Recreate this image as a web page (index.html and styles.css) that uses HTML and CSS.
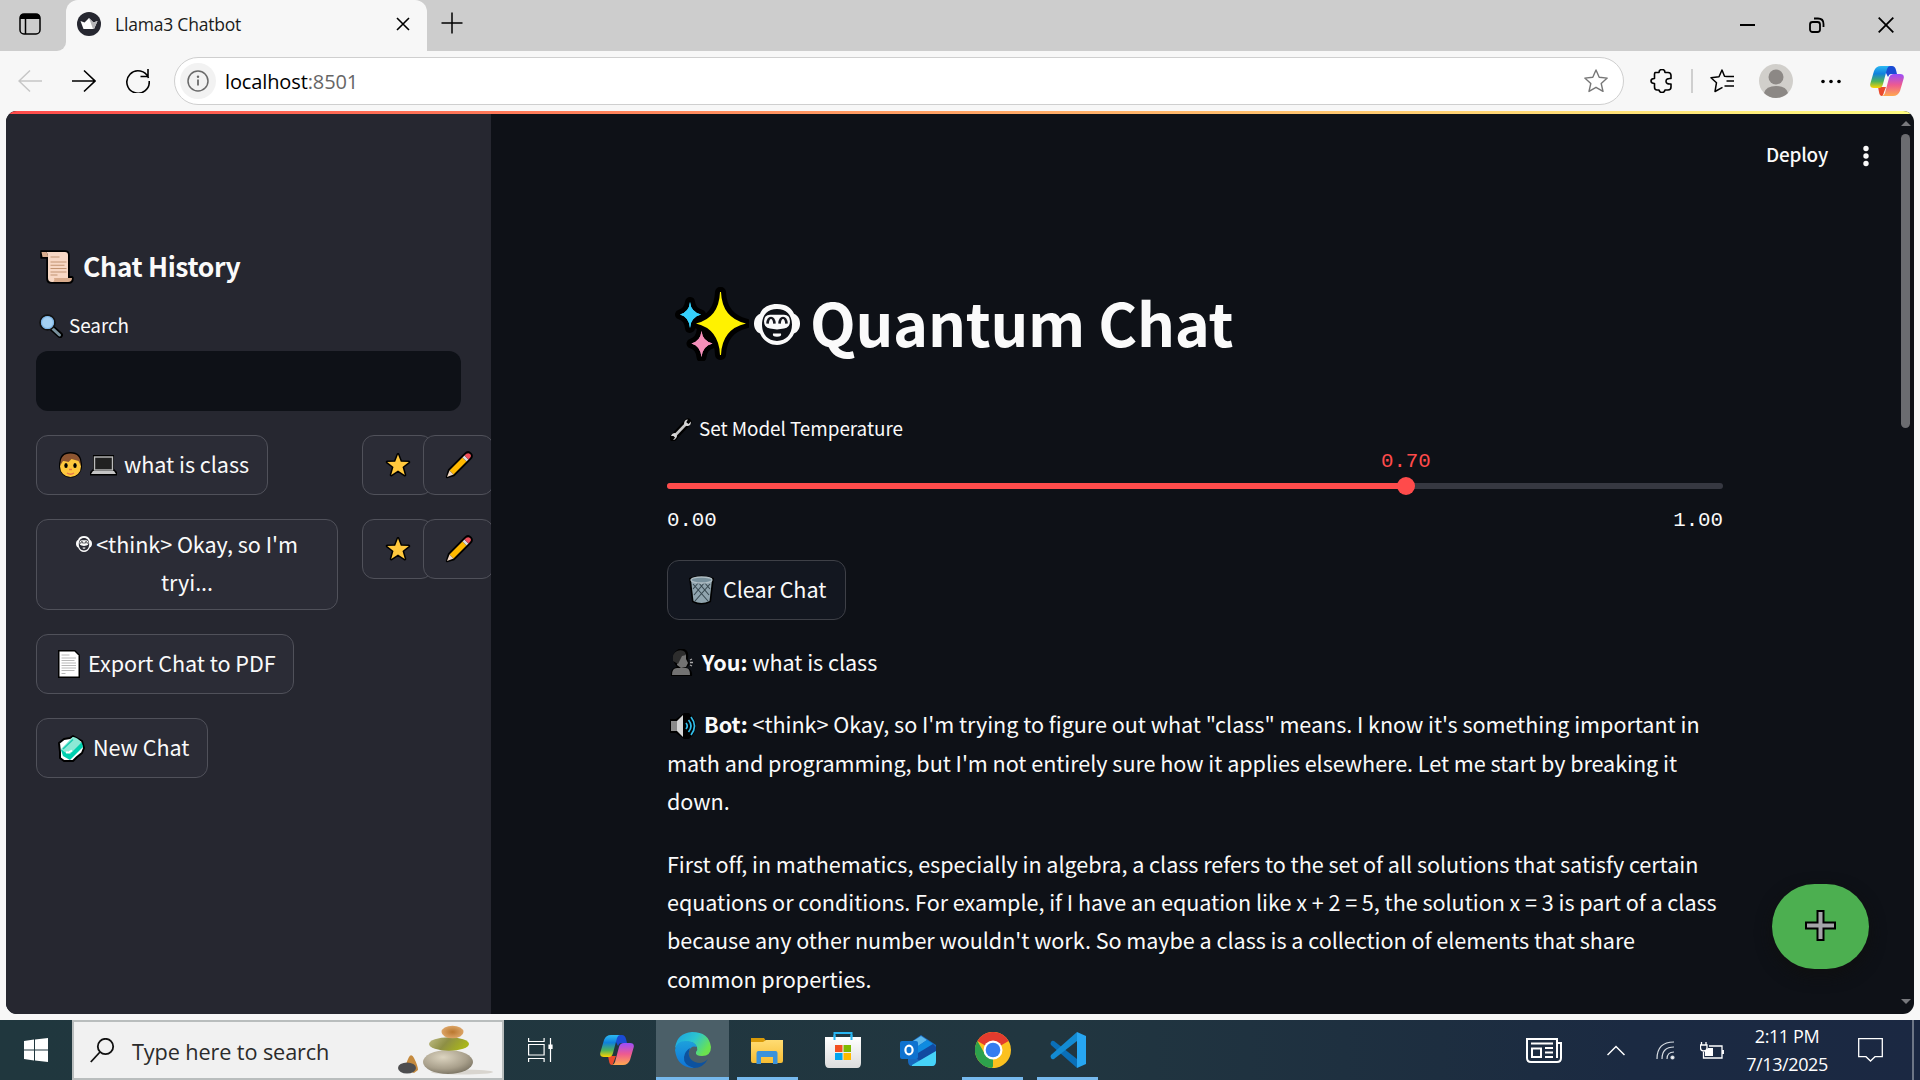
FILE: index.html
```html
<!DOCTYPE html>
<html lang="en">
<head>
<meta charset="utf-8">
<title>Llama3 Chatbot</title>
<link rel="stylesheet" href="styles.css">
</head>
<body>
<svg class="defs" width="0" height="0">
  <defs>
    <linearGradient id="cpA" x1="0" y1="0" x2="0" y2="1"><stop offset="0" stop-color="#2cb9f2"/><stop offset=".35" stop-color="#0f80dd"/><stop offset=".7" stop-color="#4fb35a"/><stop offset="1" stop-color="#ffd400"/></linearGradient>
    <linearGradient id="cpB" x1="0" y1="0" x2="0" y2="1"><stop offset="0" stop-color="#9a4dfb"/><stop offset=".5" stop-color="#ee5a90"/><stop offset="1" stop-color="#ffa94f"/></linearGradient>
    <linearGradient id="edgeA" x1="0" y1="0" x2="1" y2=".5"><stop offset="0" stop-color="#1aa0e4"/><stop offset=".55" stop-color="#2cc5cf"/><stop offset="1" stop-color="#6be34e"/></linearGradient>
    <linearGradient id="edgeB" x1="0" y1="0" x2="0" y2="1"><stop offset="0" stop-color="#1da0dc"/><stop offset="1" stop-color="#0f74d8"/></linearGradient>
    <linearGradient id="fold" x1="0" y1="0" x2="0" y2="1"><stop offset="0" stop-color="#ffdc73"/><stop offset="1" stop-color="#f7bd33"/></linearGradient>
    <linearGradient id="bag" x1="0" y1="0" x2="0" y2="1"><stop offset="0" stop-color="#fff"/><stop offset="1" stop-color="#dcdcdc"/></linearGradient>
    <radialGradient id="stone" cx=".4" cy=".3" r=".8"><stop offset="0" stop-color="#dcd4c0"/><stop offset=".6" stop-color="#a89f8b"/><stop offset="1" stop-color="#6f6858"/></radialGradient>
    <linearGradient id="moss" x1="0" y1="0" x2="1" y2=".3"><stop offset="0" stop-color="#c0bd86"/><stop offset=".5" stop-color="#8e8f45"/><stop offset="1" stop-color="#a9b51b"/></linearGradient>
    <radialGradient id="amber"><stop offset="0" stop-color="#b9772f"/><stop offset="1" stop-color="#dca466"/></radialGradient>
    <symbol id="copilot" viewBox="0 0 34 30">
      <path d="M11 0h11q3 0 4 4l1 4h-6q-2 0-3 3l-3-6z" fill="#1a4bd4"/>
      <path d="M8 21h8l-2 5q-1 4-2 4-2.500 0-3-4z" fill="#ea4a2d"/>
      <path d="M11 0h9q-2 0-3 3l-4 15q-1 4-4 4H4q-5 0-3.500-5L4 5q2-5 7-5z" fill="url(#cpA)"/>
      <path d="M24 8h6q5 0 3.500 5L30 25q-2 5-7 5H12q2 0 3-3l4-15q1-4 5-4z" fill="url(#cpB)"/>
    </symbol>
    <symbol id="star" viewBox="0 0 26 26"><path d="M13 2.500l2.800 7.300 8 .2-6.300 4.900 2.300 8.100L13 18.500l-6.800 4.500 2.300-8.100L2.200 10l8-.2z" fill="#ffc83d" stroke="#000" stroke-width="3" stroke-linejoin="round" paint-order="stroke"/></symbol>
    <symbol id="pencil" viewBox="0 0 28 28">
      <path d="M2 26l2-7L20 3q3-3 5.500-.5T25 8L9 24z" fill="#000" stroke="#000" stroke-width="2.400" stroke-linejoin="round"/>
      <path d="M4.500 19.500L17.500 6.500l4 4L8.500 23.500z" fill="#ffb900"/><path d="M2 26l2.500-6.500 4 4z" fill="#f2d9c4"/>
      <path d="M17.500 6.500l2-2 4 4-2 2z" fill="#ddd"/><path d="M19.500 4.500q3-3.500 5.500-1.500t-1.500 5.500z" fill="#f0505c"/>
    </symbol>
    <symbol id="face" viewBox="0 0 46 50">
      <path fill="#fafafa" fill-rule="evenodd" d="M23 0c9 0 15 5 17 12 4 2 6 7 6 12s-2 10-6 12c-3 8-9 14-17 14S9 44 6 36c-4-2-6-7-6-12S2 14 6 12C8 5 14 0 23 0zM23 6c-9 0-15 7-15 19s6 20 15 20 15-8 15-20S32 6 23 6z"/>
      <path fill="#fafafa" d="M16 13h14q6 0 6 8t-6 9q-7 2-14 0-6-1-6-9t6-8zM19 36h8q1 4-4 4t-4-4z"/>
      <path d="M13.500 24q.5-7 3.500-7t3.500 7M25.500 24q.5-7 3.500-7t3.500 7" fill="none" stroke="#17181f" stroke-width="2.600"/>
    </symbol>
  </defs>
</svg>

<div class="screen">
  <header class="tabstrip">
    <div class="workspace"><svg width="22" height="22" viewBox="0 0 22 22"><rect x="1" y="1" width="20" height="20" rx="4" fill="none" stroke="#000" stroke-width="1.500"/><path d="M1 6V4q0-3 3-3h14q3 0 3 3v2z"/><path d="M6.500 6v15" stroke="#000" stroke-width="1.500"/></svg></div>
    <div class="tab">
      <svg width="24" height="24" viewBox="0 0 24 24"><circle cx="12" cy="12" r="12" fill="#262730"/><path d="M3.500 9l4 1.500L12 6l4.500 4.500 4-1.500-3.500 8H6.500z" fill="#fff"/><path d="M12 6l4.500 4.500 4-1.500-3.500 8h-1z" fill="#b5b5b8"/></svg>
      <span class="tab-title">Llama3 Chatbot</span>
      <svg width="14" height="14" viewBox="0 0 14 14"><path d="M1 1l12 12M13 1L1 13" stroke="#000" stroke-width="1.600"/></svg>
    </div>
    <svg class="newtab" width="22" height="22" viewBox="0 0 22 22"><path d="M11 .5v21M.5 11h21" stroke="#000" stroke-width="1.500"/></svg>
    <div class="wincontrols">
      <svg width="16" height="16" viewBox="0 0 16 16"><path d="M0 8h15" stroke="#000" stroke-width="2"/></svg>
      <svg width="16" height="16" viewBox="0 0 16 16" fill="none" stroke="#000" stroke-width="1.800"><rect x="1" y="5" width="10" height="10" rx="2.500"/><path d="M5 1.500h4q5.500 0 5.500 5.500v3"/></svg>
      <svg width="16" height="16" viewBox="0 0 16 16"><path d="M.7.7l14.600 14.600M15.300.7L.7 15.300" stroke="#000" stroke-width="1.800"/></svg>
    </div>
  </header>

  <nav class="toolbar">
    <svg width="24" height="24" viewBox="0 0 24 24" fill="none" stroke="#c6c6c6" stroke-width="1.500"><path d="M24 12H1M12 1.500L1 12l11 10.500"/></svg>
    <svg width="24" height="24" viewBox="0 0 24 24" fill="none" stroke="#000" stroke-width="1.600"><path d="M0 12h23M12 1.500L23 12 12 22.500"/></svg>
    <svg width="24" height="24" viewBox="0 0 24 24" fill="none" stroke="#000" stroke-width="1.600"><path d="M22.500 9A11.200 11.200 0 1 0 23.200 12M22 0v7.500h-7.500"/></svg>
    <div class="omnibox">
      <span class="info"><svg width="22" height="22" viewBox="0 0 22 22"><circle cx="11" cy="11" r="10" fill="none" stroke="#6a6a6a" stroke-width="1.500"/><path d="M11 9.500v6" stroke="#6a6a6a" stroke-width="1.800"/><circle cx="11" cy="6.700" r="1.200" fill="#6a6a6a"/></svg></span>
      <span class="url">localhost<span class="port">:8501</span></span>
      <svg width="24" height="24" viewBox="0 0 24 24"><path d="M12 1l3.200 7.300 8 .8-6 5.400 1.800 7.900L12 18.300l-7 4.100 1.800-7.900-6-5.400 8-.8z" fill="none" stroke="#777" stroke-width="1.400" stroke-linejoin="round"/></svg>
    </div>
    <div class="tools">
      <svg width="23" height="24" viewBox="0 0 23 24"><path d="M5 3.500h4q0-3 3-3t3 3h3q3 0 3 3v3q-5-.5-5 2.700t5 2.800v3q0 3-3 3h-3q-.5 2.500-3 2.500T9 21H7q-2.500 0-2.500-3v-3.500Q1 14.500 1 12t3.500-2.500V5z" fill="none" stroke="#000" stroke-width="1.600" stroke-linejoin="round"/></svg>
      <span class="divider"></span>
      <svg width="24" height="24" viewBox="0 0 24 24" fill="none" stroke="#000" stroke-width="1.500" stroke-linejoin="round"><path d="M17 7.500l-2.500-.3L12 1 9 7.800l-8 .9 5.500 5L5 22.500l7.500-4.200M14.500 7.500H24M16.500 12H24M14.500 17H24"/></svg>
      <svg width="34" height="34" viewBox="0 0 34 34"><circle cx="17" cy="17" r="17" fill="#d1cfcb"/><circle cx="17" cy="13" r="7.500" fill="#8c8885"/><path d="M5 29q2-7 12-7t12 7q-5 5-12 5T5 29z" fill="#8c8885"/></svg>
      <svg width="20" height="5" viewBox="0 0 20 5"><circle cx="2" cy="2.500" r="1.800"/><circle cx="10" cy="2.500" r="1.800"/><circle cx="18" cy="2.500" r="1.800"/></svg>
      <svg width="34" height="30"><use href="#copilot"/></svg>
    </div>
  </nav>

  <div class="viewport">
    <div class="decoration"></div>
    <aside class="sidebar">
      <h2><svg width="34" height="34" viewBox="0 0 34 34"><path d="M1 1h24q4 0 4 4v22q4-1 4 1 0 5-4 5H11q-4 0-4-4V8H1z" fill="#000" stroke="#000" stroke-width="1.500" stroke-linejoin="round"/><path d="M6 2h19q3 0 3 3v24q0 3-3 3H12q-4 0-4-4V7q0-4-2-5z" fill="#f7d7c4"/><path d="M1.500 2H6q2 1 2 5H2.500zM14 28h18q0 4-4 4H13q2-1 1-4z" fill="#d8ab8c"/><path d="M10.500 7h9M10.500 12h16M10.500 15.300h14M10.500 18.500h16M10.500 22h16M10.500 25h7" stroke="#c29472" stroke-width="1.100"/></svg><span>Chat History</span></h2>
      <div class="label search-label"><svg width="24" height="24" viewBox="0 0 24 24"><path d="M13 14l8 7" stroke="#000" stroke-width="6" stroke-linecap="round"/><path d="M14 15l6.500 6" stroke="#78909c" stroke-width="3" stroke-linecap="round"/><circle cx="8.500" cy="8.500" r="7.300" fill="#a4d0f2" stroke="#111" stroke-width="2"/><circle cx="8.500" cy="8.500" r="6" fill="none" stroke="#7fb6e6" stroke-width="1.200"/></svg><span>Search</span></div>
      <div class="input"></div>
      <div class="row">
        <div class="btn b1"><svg width="25" height="27" viewBox="0 0 25 27"><circle cx="12.500" cy="14" r="11.500" fill="#000"/><path d="M1.500 12Q1 0 12.500 0T23.500 12z"/><circle cx="12.500" cy="14.500" r="10.500" fill="#ffc83d"/><path d="M2.500 13Q2 1.500 12.500 1.500T22.500 13l-2-4-7-2-3 3q-4-1-5.500-1z" fill="#8d5531"/><ellipse cx="8" cy="13.500" rx="1.700" ry="2.500"/><ellipse cx="17" cy="13.500" rx="1.700" ry="2.500"/><path d="M11 17.500h3M9 21q3.500 2.500 7 0" stroke="#e8784a" stroke-width="1.500" fill="none"/></svg><svg width="27" height="21" viewBox="0 0 27 21"><path d="M3 0h21v14l3 3v3.500H0V17l3-3z"/><rect x="4.500" y="2" width="18" height="13" fill="#212121" stroke="#bbb" stroke-width="1.400"/><path d="M3 16h21l2 3H1z" fill="#c4c4c4"/></svg><span>what is class</span></div>
        <div class="mini"><svg width="26" height="26"><use href="#star"/></svg></div><div class="mini edit"><svg width="28" height="28"><use href="#pencil"/></svg></div>
      </div>
      <div class="row">
        <div class="btn b2"><div><svg width="16" height="16" viewBox="0 0 46 50" preserveAspectRatio="none"><use href="#face" width="46" height="50"/></svg><span>&lt;think&gt; Okay, so I'm</span></div><div>tryi...</div></div>
        <div class="mini"><svg width="26" height="26"><use href="#star"/></svg></div><div class="mini edit"><svg width="28" height="28"><use href="#pencil"/></svg></div>
      </div>
      <div class="btn b3"><svg width="22" height="28" viewBox="0 0 22 28"><path d="M0 0h17l5 5v23H0z"/><path d="M1.500 1.500h15l4 4v21h-19z" fill="#fff"/><path d="M3.500 5h8M3.500 8h14.500M3.500 10.500h13M3.500 13h14.500M3.500 15.500h14.500M3.500 18h14.500M3.500 20.500h13M3.500 23.500h4" stroke="#b8b8b8"/></svg><span>Export Chat to PDF</span></div>
      <div class="btn b4"><svg width="27" height="27" viewBox="0 0 27 27"><path d="M1 8l5-4 6-1 3-2 9 5 2 7-2 5-5 4-4 4-9 0-4-3 0-6z" fill="#fff" stroke="#000" stroke-width="2" stroke-linejoin="round"/><path d="M3 15L15 2l9 6 1 4-13 13-7-4z" fill="#00cfae"/><path d="M3 14L15 2q6 1 8 6L12 19q-4 0-9-5z" fill="#8ce9d6"/><path d="M5 14L15 4.500" stroke="#18cbb0" stroke-width="1.500"/><path d="M8 17.500q3 0 6-2" stroke="#fff" stroke-width="2"/></svg><span>New Chat</span></div>
    </aside>

    <main class="main">
      <div class="apphead"><span>Deploy</span><svg width="6" height="22" viewBox="0 0 6 22" fill="#fafafa"><circle cx="3" cy="3.500" r="2.700"/><circle cx="3" cy="11" r="2.700"/><circle cx="3" cy="18.500" r="2.700"/></svg></div>
      <section class="content">
        <h1>
          <svg width="74" height="74" viewBox="0 0 74 74"><g stroke="#000" stroke-width="10" stroke-linejoin="round" paint-order="stroke"><path d="M15 15q1 10 11 12.500Q16 30 15 41q-1-11-10-13.500Q14 25 15 15z" fill="#36d0fb"/><path d="M26.500 44q1 10 11 12.500Q27.500 59 26.500 70q-1-11-10-13.500Q25.500 54 26.500 44z" fill="#f48fb9"/><path d="M45 5h1q1 26 25 31.500Q47 42 46 68h-1Q44 42 21 36.500 44 31 45 5z" fill="#fff200"/></g><path d="M26.500 44q1 10 11 12.500Q27.500 59 26.500 70q-1-11-10-13.500Q25.500 54 26.500 44z" fill="#f48fb9"/><path d="M15 15q1 10 11 12.500Q16 30 15 41q-1-11-10-13.500Q14 25 15 15z" fill="#36d0fb"/></svg>
          <svg class="bigface" width="46" height="41" viewBox="0 0 46 50" preserveAspectRatio="none"><use href="#face" width="46" height="50"/></svg>
          <span>Quantum Chat</span>
        </h1>
        <div class="label temp-label"><svg width="22" height="23" viewBox="0 0 22 23"><path d="M3 20L18 4" stroke="#000" stroke-width="7" stroke-linecap="round"/><path d="M4.500 18L17 5" stroke="#c6c6c6" stroke-width="2.600"/><path d="M21 3.500L18.500 6 16 4.500 18 1.500q-4 0-4 5 2 2 4 1.500 3-.5 3-4.500zM1 18q1-3 4-3 3 2 1.500 4.500T3 22l2-2.500L3.500 18z" fill="#d5d5d5"/></svg><span>Set Model Temperature</span></div>
        <div class="slider">
          <div class="value"><span>0.70</span></div>
          <div class="track"><div class="fill"><i class="thumb"></i></div></div>
          <div class="ticks"><span>0.00</span><span>1.00</span></div>
        </div>
        <div class="btn clear"><svg width="25" height="30" viewBox="0 0 25 30"><path d="M0 3q12-5 25 0l-3 24q-10 5-19 0z"/><path d="M2 5h21l-2.500 21q-8 4-16 0z" fill="#90a4ae"/><path d="M4 9l15 17M9 7l11 13M15 7l6 7M21 9L6 26M16 7L5 20M10 7l-6 7" stroke="#37474f" stroke-width="1.100"/><ellipse cx="12.500" cy="5" rx="10.500" ry="3" fill="#78909c" stroke="#b0bec5" stroke-width="1.300"/></svg><span>Clear Chat</span></div>
        <p class="msg l0"><svg width="24" height="28" viewBox="0 0 24 28"><path d="M1 27q-1-8 6-9Q0 9 5 3t11-2q3 2 2 9l1 6-3 3q7 1 6 8z" fill="#000"/><path d="M8 5h8v5l2 4-2 4-5 1-4-3zM2 26q0-7 5-7h9q4 0 4 7z" fill="#727272"/><path d="M3 12Q2 4 7 2t8 1l1 3-4 1-4 8z" fill="#2d2d2d"/><path d="M20 11l2-1M20 13.500h3M20 16l2 1" stroke="#aaa" stroke-width="1.300"/></svg><b>You:</b> <span>what is class</span></p>
        <p class="msg"><span class="line l1"><svg width="26" height="26" viewBox="0 0 26 26"><path d="M0 6h6l8-6h5q7 6 7 13t-7 13h-5l-8-6H0z"/><path d="M1 8h6v10H1z" fill="#8a8a8a"/><path d="M7 8l6-6v22l-6-6z" fill="#d5d5d5"/><path d="M16 10q2.500 3 0 6M18.500 7q5 6 0 12M21 4q7 9 0 18" fill="none" stroke="#31bdea" stroke-width="1.700"/></svg><b>Bot:</b> &lt;think&gt; Okay, so I'm trying to figure out what "class" means. I know it's something important in</span>
          <span class="line l2">math and programming, but I'm not entirely sure how it applies elsewhere. Let me start by breaking it</span>
          <span class="line">down.</span></p>
        <p class="msg"><span class="line l3">First off, in mathematics, especially in algebra, a class refers to the set of all solutions that satisfy certain</span>
          <span class="line l4">equations or conditions. For example, if I have an equation like x + 2 = 5, the solution x = 3 is part of a class</span>
          <span class="line l5">because any other number wouldn't work. So maybe a class is a collection of elements that share</span>
          <span class="line l6">common properties.</span></p>
      </section>
    </main>
    <div class="scrollbar"><i class="up"></i><i class="bar"></i><i class="down"></i></div>
    <div class="fab"><svg width="31" height="31" viewBox="0 0 31 31"><path d="M12.500 1h6v11.500H30v6H18.500V30h-6V18.500H1v-6h11.500z" fill="#a5a5a9" stroke="#000" stroke-width="2"/></svg></div>
  </div>

  <footer class="taskbar">
    <div class="slot start"><svg width="24" height="24" viewBox="0 0 24 24" fill="#fff"><path d="M0 3l10-1.500v10H0zM11 1.400L24 0v11.500H11zM0 12.500h10v10L0 21zM11 12.500h13V24l-13-1.400z"/></svg></div>
    <div class="searchbox">
      <svg width="25" height="25" viewBox="0 0 25 25" fill="none" stroke="#111" stroke-width="1.800"><circle cx="15.500" cy="8.500" r="7.700"/><path d="M10 14L.8 24"/></svg>
      <span>Type here to search</span>
      <svg class="stones" width="96" height="50" viewBox="0 0 96 50"><ellipse cx="64" cy="47" rx="31" ry="2.500" fill="#d9d5cf"/><path d="M8 40q4-15 8-7t4 12l-4 3-8-3z" fill="#c58a3e"/><ellipse cx="9" cy="43" rx="9" ry="5.500" fill="#4d4d4f"/><ellipse cx="50" cy="37" rx="25" ry="12" fill="url(#stone)"/><ellipse cx="51" cy="19" rx="20" ry="6.800" fill="url(#moss)"/><ellipse cx="54.500" cy="7" rx="11" ry="6.300" fill="url(#amber)"/></svg>
    </div>
    <div class="slot taskview"><svg width="25" height="24" viewBox="0 0 25 24" fill="none" stroke="#fff" stroke-width="1.200"><path d="M.6 0v3.500h15.500V0M.6 24v-3.500h15.500V24M.6 6.500h15.500v10.500H.6zM22.500 0v24"/><path d="M21 7h3v3.500h-3z" fill="#fff"/></svg></div>
    <div class="slot assistant"><svg width="34" height="30"><use href="#copilot"/></svg></div>
    <div class="slot active"><svg width="36" height="36" viewBox="0 0 36 36"><path d="M0 16Q2 1 17 0q17 0 19 15 0 9-9 9-7 0-6-4 2-2 1-5-3-6-11-5Q4 10 0 16z" fill="url(#edgeA)"/><path d="M0 18Q1 9 11 9q9 0 11 6-6-2-8 4-2 8 6 13 3 2-2 4Q2 35 0 18z" fill="url(#edgeB)"/><path d="M15 16q-4 10 5 14 7 3 13-3-5 9-14 9-11-3-10-11 1-6 6-9z" fill="#0d529f"/></svg></div>
    <div class="slot open explorer"><svg width="32" height="27" viewBox="0 0 32 27"><path d="M0 1h13l2 3h16v7H0z" fill="#d99a08"/><path d="M0 5h12l3-2h17v21q0 2-2 2H2q-2 0-2-2z" fill="url(#fold)"/><path d="M5.500 27V16q0-2 2-2h17q2 0 2 2v11H22v-7H10v7z" fill="#3a92dc"/></svg></div>
    <div class="slot"><svg width="36" height="36" viewBox="0 0 36 36"><path d="M9.500 8V1h17v7" fill="none" stroke="#29b6f2" stroke-width="2"/><path d="M0 5h36v26q0 5-4 5H4q-4 0-4-5z" fill="url(#bag)"/><path d="M9.500 3v5M26.500 3v5" stroke="#29b6f2" stroke-width="2"/><path d="M10 13h7.500v7H10z" fill="#f25022"/><path d="M18.500 13H26v7h-7.500z" fill="#7fba00"/><path d="M10 21h7.500v7H10z" fill="#00a4ef"/><path d="M18.500 21H26v7h-7.500z" fill="#ffb900"/></svg></div>
    <div class="slot"><svg width="36" height="31" viewBox="0 0 36 31"><path d="M8 9L21 0l15 10v16q0 5-4 5H12q-4 0-4-5z" fill="#1769be"/><path d="M10 8L21 1l6 4L12 15z" fill="#5bb7ec"/><path d="M27 5l6 4-18 13-4-6z" fill="#0f8be0"/><path d="M33 9l3 3v6L20 26l-7-5z" fill="#124aa0"/><path d="M12 30l24-14v10q0 5-4 5H12z" fill="#46d3f8"/><rect y="6" width="18" height="18" rx="2" fill="#0f72cf"/><ellipse cx="9" cy="15" rx="3.600" ry="4.300" fill="none" stroke="#fff" stroke-width="2.200"/></svg></div>
    <div class="slot open"><svg width="36" height="36" viewBox="0 0 36 36"><circle cx="18" cy="18" r="18" fill="#fbc11f"/><path d="M18 18L2.400 9A18 18 0 0 1 33.600 9z" fill="#e33b2e"/><path d="M2.400 9L10.200 22.500 18 27l0 9A18 18 0 0 1 2.400 9z" fill="#2da14c"/><path d="M17 36l9-14V27L20 35.900z" fill="#fbc11f"/><circle cx="18" cy="18" r="9.500" fill="#fff"/><circle cx="18" cy="18" r="7.300" fill="#367df0"/></svg></div>
    <div class="slot open"><svg width="36" height="36" viewBox="0 0 36 36"><path d="M1 10q1-2 3-1l23 18v9L1 13q-1-1 0-3z" fill="#0a6fb8"/><path d="M1 26q-1-2 0-3L27 0v9L4 27q-2 1-3-1z" fill="#138bd3"/><path d="M27 0l9 4v28l-9 4z" fill="#27a6f2"/></svg></div>
    <div class="tray">
      <svg width="36" height="25" viewBox="0 0 36 25" fill="none" stroke="#fff"><path d="M31 5h4v15q0 4-4 4H5q-4 0-4-4V1h30v19" stroke-width="2"/><path d="M5 5.500h22M19 10h8M19 14.500h8M19 19h8" stroke-width="2"/><rect x="6" y="10.500" width="9" height="8.500" stroke-width="2"/></svg>
      <svg class="chev" width="18" height="11" viewBox="0 0 18 11"><path d="M.5 10L9 1.500 17.500 10" fill="none" stroke="#fff" stroke-width="1.500"/></svg>
      <svg class="wifi" width="19" height="19" viewBox="0 0 19 19" fill="none" stroke="#d8dde3" stroke-width="1.200"><path d="M1 18Q1 1 18 1M6 18Q6 6 18 6M11 18q0-7 7-7"/><circle cx="16.500" cy="16.500" r="1.500" fill="#fff"/></svg>
      <svg class="batt" width="24" height="17" viewBox="0 0 24 17" fill="none" stroke="#fff" stroke-width="1.300"><path d="M9 4h13v12H3.500v-6M23.300 8v4M1.500 0v3M6 0v3M.5 3h6.500v3q0 3-3.200 3T.5 6z"/><path d="M5 9l3-3h5v8H5z" fill="#fff" stroke="none"/></svg>
      <div class="clock"><span class="time">2:11 PM</span><span class="date">7/13/2025</span></div>
      <svg class="note" width="25" height="25" viewBox="0 0 25 25"><path d="M.7.7h23.600v18H17L12.500 23 8 18.700H.7z" fill="none" stroke="#fff" stroke-width="1.300"/></svg>
      <span class="peek"></span>
    </div>
  </footer>
</div>
</body>
</html>
```
FILE: styles.css
```css
* { box-sizing: border-box; }
body { margin: 0; overflow: hidden; background: #f7f7f7; }
svg { flex: none; display: block; }
.defs { position: absolute; }
.screen { width: 1920px; height: 1080px; display: flex; flex-direction: column; font-family: "Open Sans", "Noto Sans", sans-serif; }

/* Browser chrome */
.tabstrip { height: 51px; background: #cdcdcd; display: flex; align-items: stretch; }
.workspace { width: 66px; padding: 13px 0 0 19px; border-bottom-right-radius: 9px; background: #cdcdcd; box-shadow: 0 12px 0 #f7f7f7; }
.tab { width: 361px; background: #f7f7f7; border-radius: 12px 12px 0 0; display: flex; align-items: center; padding: 0 17px 3px 11px; }
.tab-title { flex: 1; margin-left: 14px; font-size: 17.500px; letter-spacing: -.2px; color: #1b1b1b; }
.newtab { margin: 12px 0 0 14px; }
.wincontrols { margin: 17px 26px 0 auto; display: flex; gap: 53px; }
.toolbar { height: 60px; flex: none; background: #f7f7f7; display: flex; align-items: center; gap: 30px; padding-left: 18px; }
.omnibox { width: 1450px; height: 48px; margin-left: -6px; border: 1.500px solid #cfcfcf; border-radius: 24px; background: #fff; display: flex; align-items: center; padding: 0 15px 0 5px; }
.info { width: 36px; height: 36px; border-radius: 50%; background: #f2f2f2; display: flex; align-items: center; justify-content: center; }
.url { flex: 1; margin-left: 9px; font-size: 20px; letter-spacing: -.12px; color: #000; }
.port { color: #666; }
.tools { display: flex; align-items: center; margin-left: -4px; }
.divider { width: 2px; height: 24px; background: #cfcfcf; margin: 0 17px 0 18px; }
.tools svg:nth-child(4) { margin-left: 25px; }
.tools svg:nth-child(5) { margin-left: 28px; }
.tools svg:nth-child(6) { margin-left: 29px; }

/* Page */
.viewport { position: relative; width: 1908px; height: 903px; flex: none; margin-left: 6px; border-radius: 11px; overflow: hidden; display: flex; background: #0e1117; color: #fafafa; font-family: "Noto Sans CJK SC", sans-serif; font-size: 21.600px; letter-spacing: -.045px; line-height: 38.400px; white-space: nowrap; }
.decoration { position: absolute; inset: 0 0 auto 0; height: 3px; background: linear-gradient(90deg, #ff4b4b, #fffd80); }
.sidebar { width: 485px; flex: none; background: #262730; padding: 137px 0 0 30px; overflow: hidden; display: flex; flex-direction: column; align-items: flex-start; }
h2 { margin: 0; height: 38px; padding-left: 4px; font-size: 26.500px; font-weight: 700; line-height: 38px; display: flex; gap: 9px; align-items: center; }
h2 span { letter-spacing: -.35px; padding-bottom: 2px; }
h2 svg { margin-top: -1px; }
.label { display: flex; align-items: center; font-size: 18.900px; line-height: 32px; height: 32px; }
.label span { padding-bottom: 2px; }
.search-label { margin: 24px 0 9px 3px; gap: 6px; }
.input { width: 425px; height: 60px; border-radius: 12px; background: #0e1117; margin-bottom: 24px; }
.row { display: flex; margin-bottom: 24px; align-items: flex-start; }
.btn { border: 1px solid #50515a; border-radius: 12px; background: #2b2c36; display: flex; align-items: center; height: 60px; padding-left: 21px; }
.btn > span { padding-bottom: 2px; }
.b1 { width: 232px; margin-right: 94px; }
.b1 svg + svg { margin: 0 7px 0 7px; }
.b2 { width: 302px; height: 91px; margin-right: 24px; flex-direction: column; padding: 5px 0 0; }
.b2 div { display: flex; align-items: center; gap: 4px; }
.b3 { width: 258px; margin-bottom: 24px; gap: 8px; }
.b4 { width: 172px; gap: 8px; }
.mini { width: 71px; height: 60px; flex: none; border: 1px solid #50515a; border-radius: 12px; background: #2b2c36; display: flex; align-items: center; justify-content: center; }
.edit { margin-left: -10px; }

.main { flex: 1; display: flex; flex-direction: column; padding-left: 176px; }
.apphead { display: flex; align-items: center; justify-content: flex-end; gap: 35px; padding: 26px 28px 0 0; height: 64px; font-size: 18.900px; font-weight: 500; letter-spacing: -.2px; }
.apphead span { padding-bottom: 3px; }
.apphead svg { margin-top: -1px; }
.content { width: 1056px; margin-top: 105px; }
h1 { margin: 0; height: 80px; font-size: 59.400px; font-weight: 700; line-height: 82px; letter-spacing: -.25px; display: flex; align-items: flex-start; padding-left: 8px; }
h1 svg { margin-top: 7px; }
h1 .bigface { margin: 24px 10px 0 5px; }
.temp-label { margin: 53px 0 0 3px; gap: 7px; }
.slider { font-family: "Liberation Mono", monospace; font-size: 20.800px; line-height: 24px; }
.value { color: #ff4b4b; margin-top: 5px; height: 33px; padding-left: 714px; }
.track { height: 6px; border-radius: 3px; background: #363841; }
.fill { width: 70%; height: 6px; border-radius: 3px; background: #ff4b4b; display: flex; justify-content: flex-end; align-items: center; }
.thumb { width: 18px; height: 18px; border-radius: 50%; background: #ff4b4b; margin-right: -9px; flex: none; }
.ticks { display: flex; justify-content: space-between; margin-top: 20px; }
.clear { width: 179px; margin-top: 27px; background: #131720; border-color: #3e4047; gap: 9px; }
.msg { margin: 24px 0 0; height: auto; }
.msg.l0 { margin-top: 23px; }
.line { display: block; }
.msg svg { display: inline-block; vertical-align: -1px; margin: -5px 8px -5px 3px; }
.scrollbar { width: 17px; flex: none; display: flex; flex-direction: column; align-items: center; padding-top: 10px; }
.up, .down { border: 5px solid transparent; border-width: 0 5px 5px; border-bottom-color: #77787c; }
.down { transform: rotate(180deg); margin-top: 571px; }
.bar { width: 9px; height: 294px; margin-top: 8px; border-radius: 5px; background: #6b6c70; flex: none; }
.fab { position: absolute; right: 45px; bottom: 45px; width: 97px; height: 85px; border-radius: 43px; background: #4caf50; box-shadow: 0 6px 16px rgba(16,16,16,.9); display: flex; align-items: center; justify-content: center; padding-bottom: 2px; }

/* Taskbar */
.taskbar { height: 60px; margin-top: 6px; flex: none; display: flex; background: linear-gradient(90deg, #20373e 0, #213640 55%, #1d2e40 75%, #1b2a42 85%, #1b2842); color: #fff; }
.slot { width: 75px; display: flex; align-items: center; justify-content: center; position: relative; }
.start { width: 72px; }
.taskview { width: 73px; }
.assistant { width: 79px; }
.explorer { width: 76px; }
.searchbox { width: 432px; border: 2px solid #b9bdbd; background: #f1f1f1; display: flex; align-items: center; padding: 0 8px 0 16px; color: #2b2b2b; font-size: 21.700px; letter-spacing: -.12px; white-space: nowrap; }
.searchbox span { flex: 1; margin-left: 17px; padding-top: 2px; }
.active { width: 73px; background: #4b5f68; border-bottom: 3px solid #76b9ed; padding-top: 3px; }
.open::after { content: ""; position: absolute; bottom: 0; left: 7px; width: 61px; height: 3px; background: #76b9ed; }
.explorer::after { left: 8px; }
.tray { margin-left: auto; display: flex; align-items: center; font-size: 18px; line-height: 28px; }
.chev { margin-left: 45px; }
.wifi { margin-left: 31px; }
.batt { margin-left: 25px; }
.clock { width: 90px; margin-left: 18px; display: flex; flex-direction: column; align-items: center; white-space: nowrap; letter-spacing: -.4px; }
.note { margin-left: 26px; }
.peek { width: 2px; height: 60px; background: #6d7686; margin: 0 6px 0 29px; }
```
